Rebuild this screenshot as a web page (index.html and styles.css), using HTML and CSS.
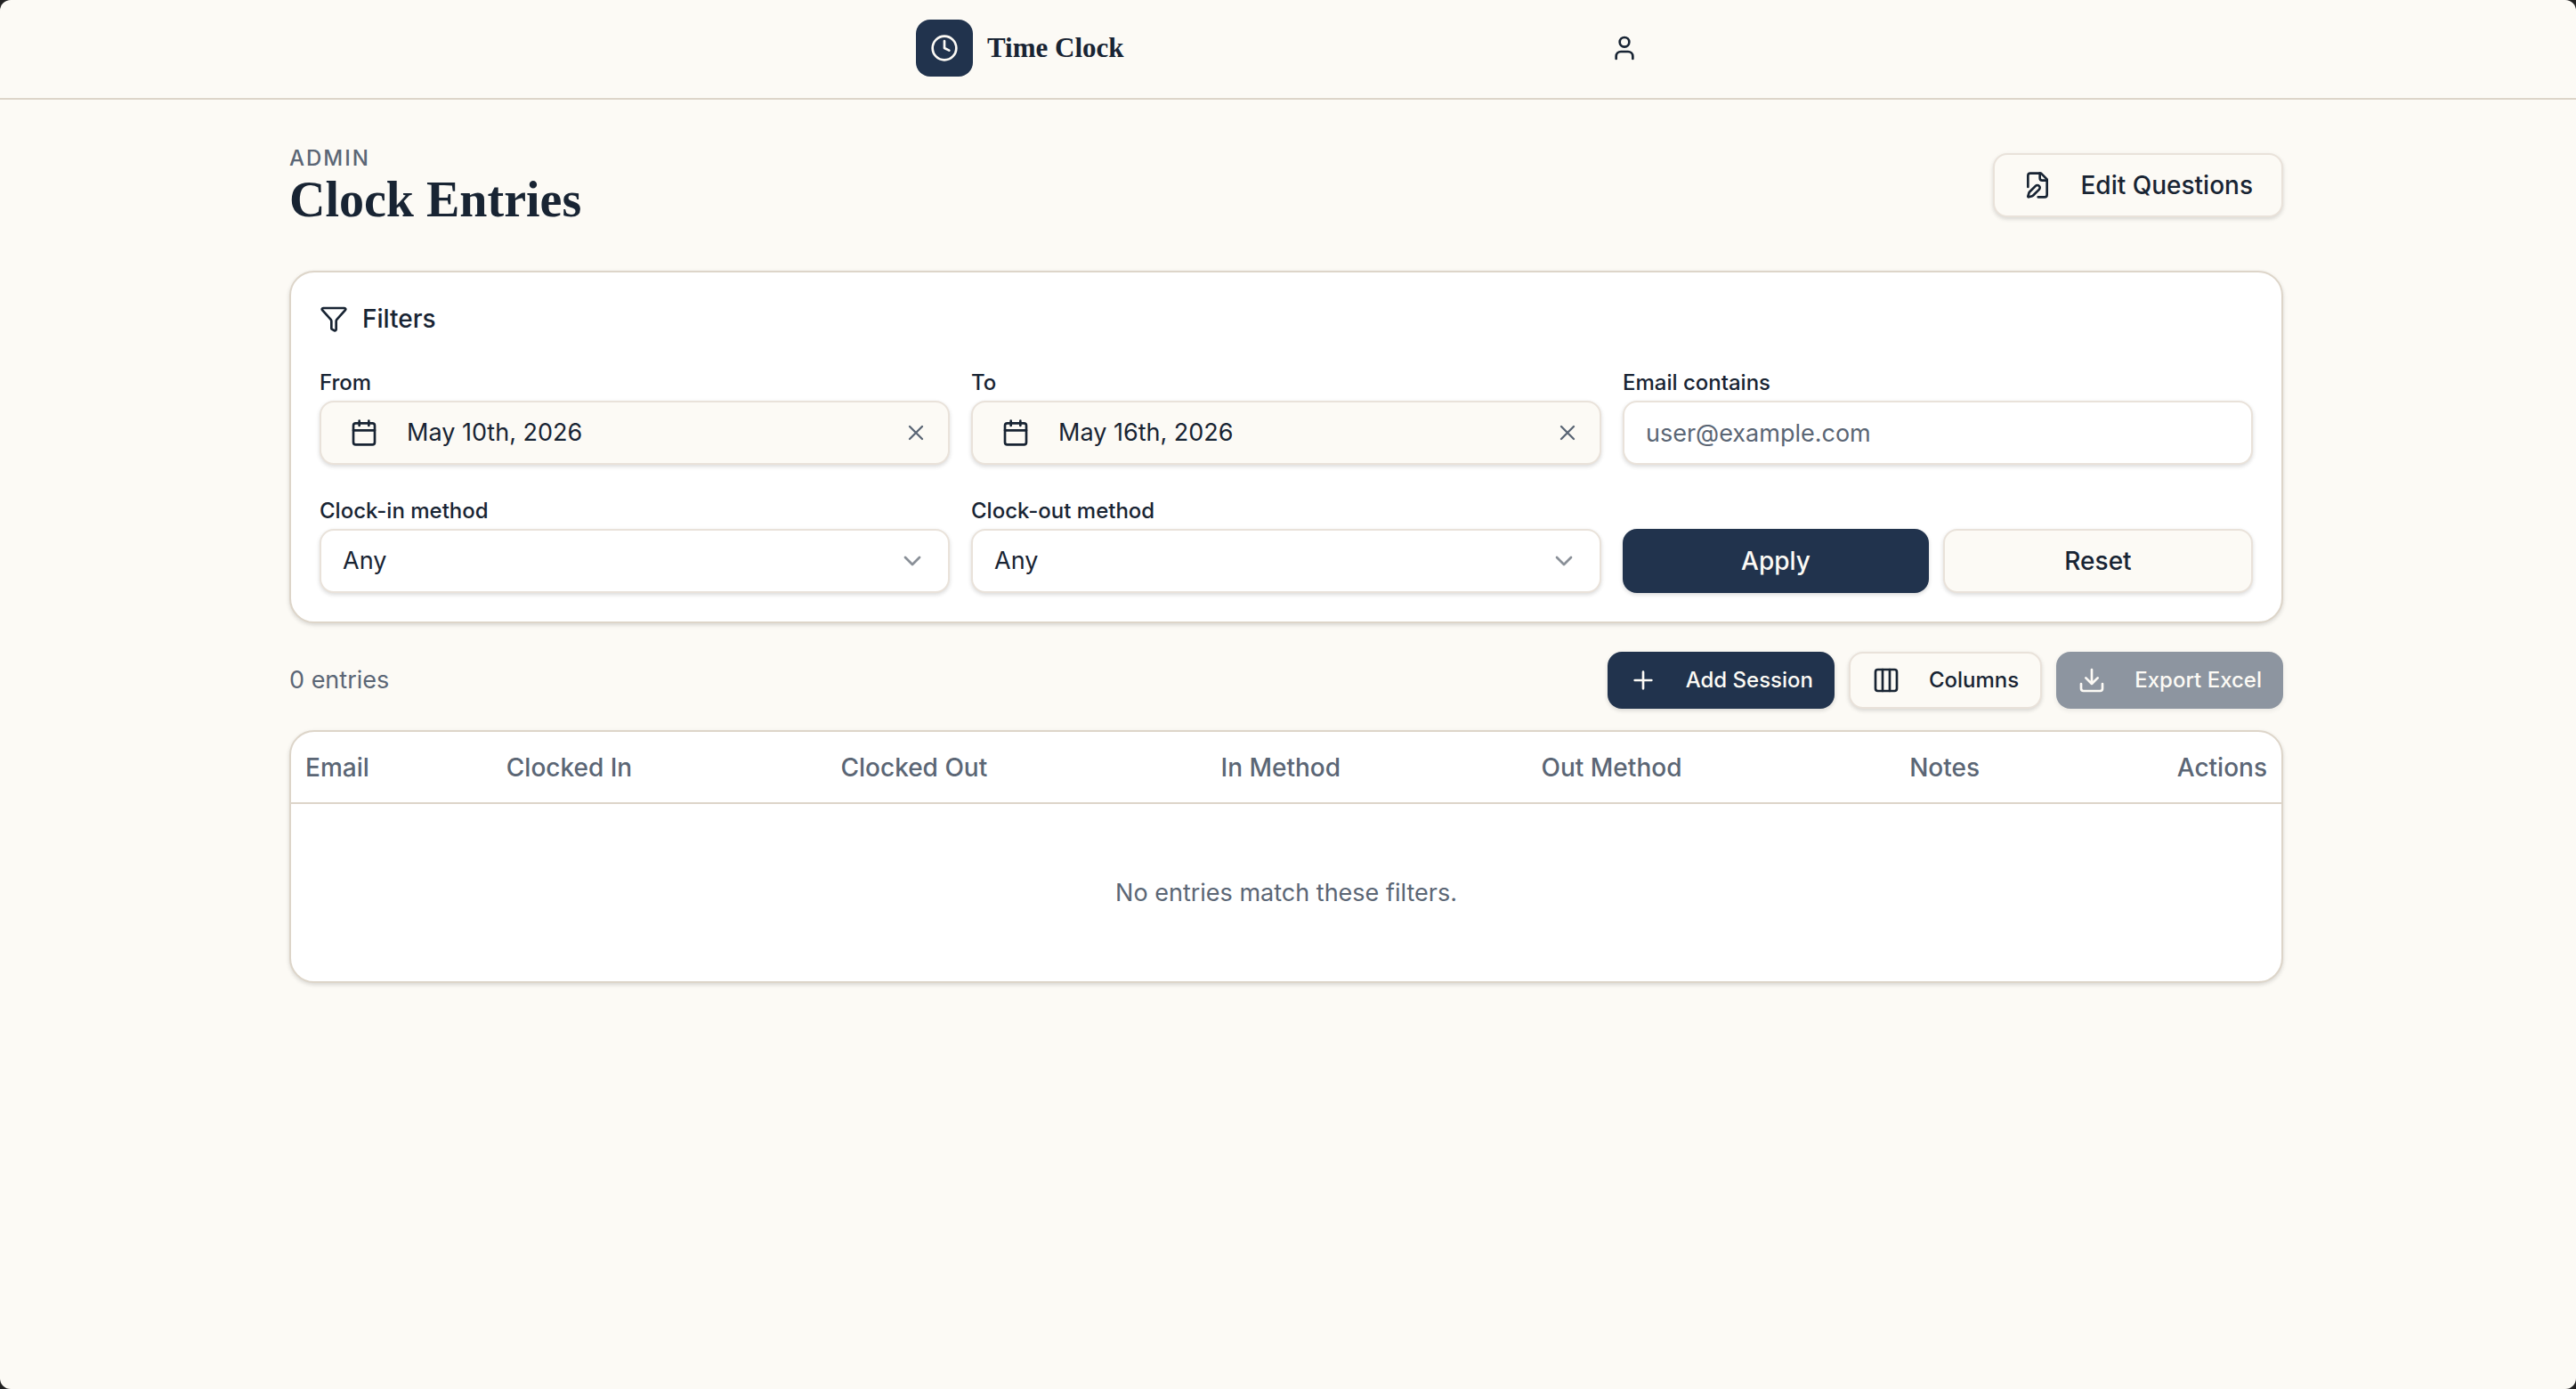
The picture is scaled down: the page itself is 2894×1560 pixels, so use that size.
FILE: index.html
```html
<!DOCTYPE html>
<html lang="en">
<head>
<meta charset="utf-8">
<title>Clock Entries</title>
<meta name="viewport" content="width=device-width, initial-scale=1">
<link rel="stylesheet" href="styles.css">
</head>
<body>
<div class="app">
  <header class="topbar">
    <div class="topbar-inner">
      <a class="brand" href="#">
        <span class="brand-mark"><svg class="icon" viewBox="0 0 24 24"><circle cx="12" cy="12" r="10"/><path d="M12 6v6l4 2"/></svg></span>
        <span>Time Clock</span>
      </a>
      <button class="account" type="button" aria-label="Account"><svg class="icon" viewBox="0 0 24 24"><path d="M19 21v-2a4 4 0 0 0-4-4H9a4 4 0 0 0-4 4v2"/><circle cx="12" cy="7" r="4"/></svg></button>
    </div>
  </header>

  <main class="page">
    <div class="content">
      <div class="heading">
        <div class="titles">
          <p class="eyebrow">Admin</p>
          <h1>Clock Entries</h1>
        </div>
        <button class="btn btn-outline" type="button">
          <svg class="icon" viewBox="0 0 24 24"><path d="M12.5 22H18a2 2 0 0 0 2-2V7l-5-5H6a2 2 0 0 0-2 2v9.5"/><path d="M14 2v4a2 2 0 0 0 2 2h4"/><path d="M13.378 15.626a1 1 0 1 0-3.004-3.004l-5.01 5.012a2 2 0 0 0-.506.854l-.837 2.87a.5.5 0 0 0 .62.62l2.87-.837a2 2 0 0 0 .854-.506z"/></svg>
          Edit Questions
        </button>
      </div>

      <form class="card filters">
        <h2><svg class="icon" viewBox="0 0 24 24"><path d="M10 20a1 1 0 0 0 .553.895l2 1A1 1 0 0 0 14 21v-7a2 2 0 0 1 .517-1.341L21.74 4.67A1 1 0 0 0 21 3H3a1 1 0 0 0-.742 1.67l7.225 7.989A2 2 0 0 1 10 14z"/></svg>Filters</h2>
        <div class="filter-grid">
          <div class="field">
            <label for="from">From</label>
            <div class="control">
              <button id="from" class="btn btn-outline date" type="button"><svg class="icon" viewBox="0 0 24 24"><path d="M8 2v4M16 2v4M3 10h18"/><rect width="18" height="18" x="3" y="4" rx="2"/></svg>May 10th, 2026</button>
              <button class="clear" type="button" aria-label="Clear from date"><svg class="icon" viewBox="0 0 24 24"><path d="M18 6 6 18M6 6l12 12"/></svg></button>
            </div>
          </div>
          <div class="field">
            <label for="to">To</label>
            <div class="control">
              <button id="to" class="btn btn-outline date" type="button"><svg class="icon" viewBox="0 0 24 24"><path d="M8 2v4M16 2v4M3 10h18"/><rect width="18" height="18" x="3" y="4" rx="2"/></svg>May 16th, 2026</button>
              <button class="clear" type="button" aria-label="Clear to date"><svg class="icon" viewBox="0 0 24 24"><path d="M18 6 6 18M6 6l12 12"/></svg></button>
            </div>
          </div>
          <div class="field">
            <label for="email">Email contains</label>
            <input id="email" class="input" type="email" placeholder="user@example.com">
          </div>
          <div class="field">
            <label for="in-method">Clock-in method</label>
            <div class="control">
              <select id="in-method" class="input"><option>Any</option></select>
              <svg class="icon chevron" viewBox="0 0 24 24"><path d="m6 9 6 6 6-6"/></svg>
            </div>
          </div>
          <div class="field">
            <label for="out-method">Clock-out method</label>
            <div class="control">
              <select id="out-method" class="input"><option>Any</option></select>
              <svg class="icon chevron" viewBox="0 0 24 24"><path d="m6 9 6 6 6-6"/></svg>
            </div>
          </div>
          <div class="actions">
            <button class="btn btn-primary" type="submit">Apply</button>
            <button class="btn btn-outline" type="reset">Reset</button>
          </div>
        </div>
      </form>

      <div class="toolbar">
        <p>0 entries</p>
        <div class="toolbar-buttons">
          <button class="btn btn-small btn-primary" type="button"><svg class="icon" viewBox="0 0 24 24"><path d="M5 12h14M12 5v14"/></svg>Add Session</button>
          <button class="btn btn-small btn-outline" type="button"><svg class="icon" viewBox="0 0 24 24"><rect width="18" height="18" x="3" y="3" rx="2"/><path d="M9 3v18M15 3v18"/></svg>Columns</button>
          <button class="btn btn-small btn-primary" type="button" disabled><svg class="icon" viewBox="0 0 24 24"><path d="M12 15V3M21 15v4a2 2 0 0 1-2 2H5a2 2 0 0 1-2-2v-4M7 10l5 5 5-5"/></svg>Export Excel</button>
        </div>
      </div>

      <div class="card">
        <table>
          <colgroup><col class="col-email"><col class="col-in"><col class="col-out"><col class="col-in-method"><col class="col-out-method"><col><col class="col-actions"></colgroup>
          <thead>
            <tr><th>Email</th><th>Clocked In</th><th>Clocked Out</th><th>In Method</th><th>Out Method</th><th>Notes</th><th class="end">Actions</th></tr>
          </thead>
          <tbody>
            <tr><td class="empty" colspan="7">No entries match these filters.</td></tr>
          </tbody>
        </table>
      </div>
    </div>
  </main>
</div>
</body>
</html>
```
FILE: styles.css
```css
:root {
  --paper: #fcfaf5;
  --ink: #182433;
  --muted: #5b6675;
  --navy: #21334d;
  --line: #ddd5c9;
  --line-soft: #e9e2da;
  --shadow: 0 2px 4px rgba(0, 0, 0, .1), 0 2px 6px rgba(0, 0, 0, .05);
}

* { box-sizing: border-box; }

html { background: #222; }

body {
  margin: 0;
  color: var(--ink);
  font: 400 27px/40px Inter, "Liberation Sans", sans-serif;
}

h1, h2, p { margin: 0; }

button, input, select { font: inherit; color: inherit; }

.app {
  min-height: 100vh;
  background: var(--paper);
  border-radius: 12px;
}

.icon {
  width: 32px;
  height: 32px;
  flex: none;
  fill: none;
  stroke: currentColor;
  stroke-width: 2;
  stroke-linecap: round;
  stroke-linejoin: round;
}

/* Both bars keep the same narrow gutter at the window's right edge. */
.topbar, .page { padding-right: 4px; }

.topbar { border-bottom: 2px solid var(--line); }

.topbar-inner {
  display: flex;
  align-items: center;
  justify-content: space-between;
  max-width: 896px;
  margin: 0 auto;
  padding: 18px 32px 20px;
}

.brand {
  display: flex;
  align-items: center;
  gap: 16px;
  color: inherit;
  text-decoration: none;
  font: 700 31px/40px "Liberation Serif", serif;
}

.brand-mark {
  display: grid;
  place-items: center;
  width: 64px;
  height: 64px;
  border-radius: 16px;
  background: var(--navy);
  color: var(--paper);
}

.account {
  display: grid;
  place-items: center;
  width: 72px;
  height: 72px;
  padding: 0;
  border: 0;
  background: none;
}

.content {
  max-width: 2304px;
  margin: 0 auto;
  padding: 48px 32px;
}

.heading {
  display: flex;
  align-items: center;
  justify-content: space-between;
  margin-bottom: 48px;
}

.titles { padding-bottom: 4px; }

.eyebrow {
  color: var(--muted);
  font-size: 24px;
  line-height: 36px;
  font-weight: 500;
  letter-spacing: 2px;
  text-transform: uppercase;
}

h1 { font: 700 56px/56px "Liberation Serif", serif; }

.btn {
  display: inline-flex;
  align-items: center;
  justify-content: center;
  gap: 32px;
  height: 72px;
  padding: 0 32px;
  border: 0;
  border-radius: 16px;
  box-shadow: var(--shadow);
  font-size: 28px;
  font-weight: 500;
  white-space: nowrap;
}

.btn-outline { border: 2px solid var(--line-soft); background: var(--paper); }
.btn-primary { background: var(--navy); color: var(--paper); }
.btn-small { height: 64px; padding: 0 24px; font-size: 24px; }
.btn:disabled { opacity: .5; }

.card {
  border: 2px solid var(--line);
  border-radius: 28px;
  background: #fff;
  box-shadow: var(--shadow);
  overflow: hidden;
}

.filters { padding: 32px; }

h2 {
  display: flex;
  align-items: center;
  gap: 16px;
  margin-bottom: 36px;
  font-size: 28px;
  line-height: 40px;
  font-weight: 500;
}

.filter-grid {
  display: grid;
  grid-template-columns: repeat(3, minmax(0, 1fr));
  gap: 36px 24px;
}

.field { display: flex; flex-direction: column; gap: 4px; }

label { font-size: 24px; line-height: 32px; font-weight: 500; }

.control { position: relative; display: grid; }

.date { justify-content: flex-start; font-size: 27px; font-weight: 400; }

.clear {
  position: absolute;
  top: 20px;
  right: 22px;
  display: grid;
  place-items: center;
  width: 32px;
  height: 32px;
  padding: 0;
  border: 0;
  background: none;
  color: var(--muted);
}

.clear .icon { width: 28px; height: 28px; }

.input {
  width: 100%;
  height: 72px;
  padding: 0 24px;
  border: 2px solid var(--line-soft);
  border-radius: 16px;
  background: #fff;
  box-shadow: var(--shadow);
  appearance: none;
}

.input::placeholder { color: var(--muted); opacity: 1; }

.chevron {
  position: absolute;
  top: 20px;
  right: 26px;
  opacity: .5;
  pointer-events: none;
}

.actions { display: flex; align-items: flex-end; gap: 16px; }
.actions .btn { flex: 1 1 0; }

.toolbar {
  display: flex;
  align-items: center;
  justify-content: space-between;
  margin: 32px 0 24px;
  color: var(--muted);
}

.toolbar-buttons { display: flex; gap: 16px; }
.toolbar-buttons .btn-outline { color: var(--ink); }

table {
  width: 100%;
  table-layout: fixed;
  border-collapse: collapse;
  color: var(--muted);
}

th {
  height: 80px;
  padding: 0 16px;
  border-bottom: 2px solid var(--line);
  text-align: left;
  font-size: 28px;
  font-weight: 500;
}

.end { text-align: right; }

.empty { height: 200px; padding: 0 16px; text-align: center; }

.col-email { width: 10.1%; }
.col-in { width: 16.8%; }
.col-out { width: 19.1%; }
.col-in-method { width: 16.1%; }
.col-out-method { width: 18.5%; }
.col-actions { width: 6%; }
```
